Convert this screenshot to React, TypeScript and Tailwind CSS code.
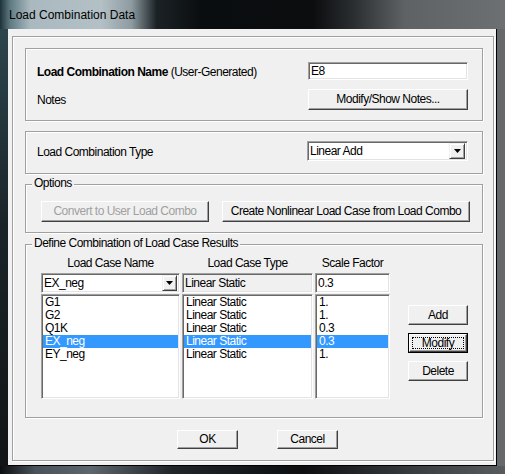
import React from 'react';

const FONT = "font-['Liberation_Sans',Arial,sans-serif]";

const ROWS = [
  { name: 'G1', type: 'Linear Static', sf: '1.' },
  { name: 'G2', type: 'Linear Static', sf: '1.' },
  { name: 'Q1K', type: 'Linear Static', sf: '0.3' },
  { name: 'EX_neg', type: 'Linear Static', sf: '0.3' },
  { name: 'EY_neg', type: 'Linear Static', sf: '1.' },
];
const SELECTED = 3;

// raised classic button
function WinButton({
  children,
  className = '',
  disabled = false,
}: {
  children: React.ReactNode;
  className?: string;
  disabled?: boolean;
}) {
  return (
    <div
      className={`flex items-center justify-center bg-[#f0f0f0] border border-t-white border-l-white border-b-[#404040] border-r-[#404040] shadow-[inset_-1px_-1px_0_#a0a0a0] whitespace-nowrap ${
        disabled ? 'text-[#a0a0a0]' : 'text-black'
      } ${className}`}
    >
      {children}
    </div>
  );
}

// sunken edit field
function Field({ children, className = '' }: { children?: React.ReactNode; className?: string }) {
  return (
    <div
      className={`flex items-center border border-t-[#a0a0a0] border-l-[#a0a0a0] border-b-white border-r-white shadow-[inset_1px_1px_0_#696969,inset_-1px_-1px_0_#e3e3e3] ${className}`}
    >
      {children}
    </div>
  );
}

function Arrow() {
  return (
    <svg width="7" height="4" viewBox="0 0 7 4">
      <path d="M0 0h7L3.5 4z" fill="#000" />
    </svg>
  );
}

function DropBtn({ className = '' }: { className?: string }) {
  return (
    <div
      className={`flex items-center justify-center bg-[#f0f0f0] border border-t-[#f0f0f0] border-l-[#f0f0f0] border-b-[#404040] border-r-[#404040] shadow-[inset_1px_1px_0_#fff,inset_-1px_-1px_0_#a0a0a0] ${className}`}
    >
      <Arrow />
    </div>
  );
}

function Group({
  label,
  className = '',
  children,
}: {
  label?: string;
  className?: string;
  children: React.ReactNode;
}) {
  return (
    <div
      className={`relative w-[458px] border border-[#a0a0a0] shadow-[inset_1px_1px_0_#fff,1px_1px_0_#fff] ${className}`}
    >
      {label && (
        <span className="absolute left-[6px] top-[-9px] px-[2px] bg-[#f0f0f0] leading-[15px]">{label}</span>
      )}
      {children}
    </div>
  );
}

function ListBox({
  items,
  className = '',
}: {
  items: string[];
  className?: string;
}) {
  return (
    <div
      className={`h-[105px] bg-white border border-t-[#a0a0a0] border-l-[#a0a0a0] border-b-white border-r-white shadow-[inset_1px_1px_0_#696969,inset_-1px_-1px_0_#e3e3e3] pt-[1px] px-[1px] ${className}`}
    >
      {items.map((it, i) => (
        <div
          key={i}
          className={`h-[13px] leading-[13px] pl-[2px] ${i === SELECTED ? 'bg-[#3399ff] text-white' : ''}`}
        >
          {it}
        </div>
      ))}
    </div>
  );
}

export default function App() {
  return (
    <div className={`w-[505px] h-[474px] flex flex-col bg-[#15191c] ${FONT} text-[12px] tracking-[-0.5px] leading-[15px] text-black`}>
      {/* Title bar */}
      <div className="h-[29px] flex items-center pl-[9px] pt-[2px] bg-[linear-gradient(90deg,#1e3138_0%,#5f7a83_2%,#aab9bf_6%,#b3c1c7_20%,#8e9ca2_26%,#1b2226_31%,#0a0d0f_40%,#0b0d0f_62%,#2b2e31_70%,#5f6265_80%,#6d7073_100%)]">
        <span className="text-[12px] tracking-normal text-black">Load Combination Data</span>
      </div>

      <div className="flex h-[437px]">
        <div className="w-[8px] bg-[linear-gradient(180deg,#2c454d_0%,#1a2428_45%,#111416_100%)]" />

        {/* Client area */}
        <div className="w-[489px] bg-[#f0f0f0] border-r border-b border-black pl-[4px] pt-[7px]">
          <div className="w-[482px] h-[425px] border border-[#a0a0a0] shadow-[inset_1px_1px_0_#fff,1px_1px_0_#fff] pt-[11px] pl-[12px] flex flex-col">
            {/* Name */}
            <Group className="h-[73px] pl-[11px] pr-[14px] pt-[13px] flex flex-col">
              <div className="h-[18px] flex items-center justify-between">
                <span className="pt-[2px]">
                  <span className="font-bold">Load Combination Name</span> (User-Generated)
                </span>
                <Field className="w-[160px] h-[18px] bg-white pl-[2px]">E8</Field>
              </div>
              <div className="mt-[9px] h-[21px] flex items-center justify-between">
                <span className="pt-[2px]">Notes</span>
                <WinButton className="w-[160px] h-[21px]">Modify/Show Notes...</WinButton>
              </div>
            </Group>

            {/* Type */}
            <Group className="mt-[10px] h-[43px] pl-[11px] pr-[14px] pt-[9px] flex items-start justify-between">
              <span className="h-[20px] pt-[2px] flex items-center">Load Combination Type</span>
              <Field className="w-[161px] h-[20px] bg-white pl-[2px] pr-[2px] justify-between">
                <span>Linear Add</span>
                <DropBtn className="w-[16px] h-[16px]" />
              </Field>
            </Group>

            {/* Options */}
            <Group label="Options" className="mt-[10px] h-[49px] pl-[15px] pt-[16px] flex items-start">
              <WinButton disabled className="w-[168px] h-[21px]">
                Convert to User Load Combo
              </WinButton>
              <WinButton className="ml-[13px] w-[248px] h-[21px]">Create Nonlinear Load Case from Load Combo</WinButton>
            </Group>

            {/* Define */}
            <Group label="Define Combination of Load Case Results" className="mt-[11px] h-[174px] pl-[15px] pt-[11px] flex items-start">
              <div className="w-[139px] flex flex-col">
                <div className="h-[15px] text-center">Load Case Name</div>
                <Field className="mt-[2px] h-[20px] bg-white pl-[2px] pr-[2px] justify-between">
                  <span>EX_neg</span>
                  <DropBtn className="w-[15px] h-[16px]" />
                </Field>
                <ListBox className="mt-[1px]" items={ROWS.map((r) => r.name)} />
              </div>
              <div className="ml-[2px] w-[131px] flex flex-col">
                <div className="h-[15px] text-center">Load Case Type</div>
                <Field className="mt-[2px] h-[20px] bg-[#f0f0f0] pl-[2px]">Linear Static</Field>
                <ListBox className="mt-[1px]" items={ROWS.map((r) => r.type)} />
              </div>
              <div className="ml-[2px] w-[75px] flex flex-col">
                <div className="h-[15px] text-center">Scale Factor</div>
                <Field className="mt-[2px] h-[20px] bg-white pl-[2px]">0.3</Field>
                <ListBox className="mt-[1px]" items={ROWS.map((r) => r.sf)} />
              </div>
              <div className="ml-[18px] mt-[49px] w-[60px] flex flex-col">
                <WinButton className="h-[20px]">Add</WinButton>
                <div className="mt-[8px] h-[20px] border border-black">
                  <WinButton className="h-full p-[2px]">
                    <span className="self-stretch flex-1 flex items-center justify-center border border-dotted border-black">Modify</span>
                  </WinButton>
                </div>
                <WinButton className="mt-[8px] h-[20px]">Delete</WinButton>
              </div>
            </Group>

            {/* OK / Cancel */}
            <div className="mt-[12px] pl-[152px] flex">
              <WinButton className="w-[61px] h-[19px]">OK</WinButton>
              <WinButton className="ml-[39px] w-[61px] h-[19px]">Cancel</WinButton>
            </div>
          </div>
        </div>

        <div className="w-[8px] bg-[#66696c]" />
      </div>

      {/* Bottom frame */}
      <div className="h-[8px] bg-[linear-gradient(90deg,#0b0d0f_0%,#49525a_7%,#5d666c_18%,#20252a_34%,#0c0e10_60%,#3f4245_85%,#595c5f_100%)]" />
    </div>
  );
}
